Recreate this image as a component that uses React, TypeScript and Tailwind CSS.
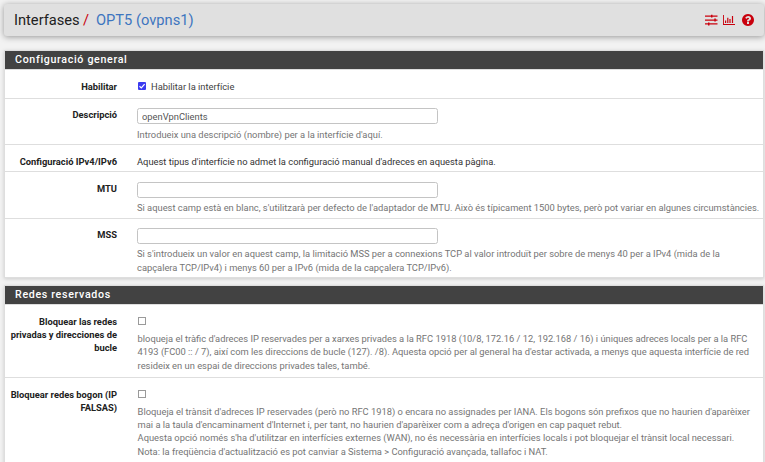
import type { ReactNode } from "react";

function Header() {
  return (
    <header className="mr-px ml-1 flex h-8 items-center justify-between rounded-[3px] bg-[#e0e0e0] pr-[10px] pl-[10px] shadow-[0_1px_6px_rgba(0,0,0,0.38)]">
      <h1 className="flex text-[14.67px] leading-8 whitespace-pre text-[#212121]">
        <span className="w-[66px]">Interfases</span>
        <span className="w-4 pl-[3px] text-[#c9000d]">/</span>
        <span className="text-[#3d75bf]">OPT5 (ovpns1)</span>
      </h1>
      <div className="flex items-center text-[#c9000d]">
        <svg className="mr-[5px]" width="13" height="12" viewBox="0 0 13 12" fill="currentColor">
          <path d="M0 1.500h12.500v1.300H0zM0 5.400h12.500v1.300H0zM0 9.300h12.500v1.300H0z" />
          <path d="M6 .7h1.500v2.900H6zM9.300 4.600h1.500v2.900H9.300zM3 8.500h1.500v2.900H3z" />
        </svg>
        <svg className="mr-[7px]" width="12" height="12" viewBox="0 0 12 12" fill="currentColor">
          <path d="M0 1h.9v9.100H12v.9H0zM2 6.500h1.200V9H2zM4.200 3.800h1.200V9H4.200zM6.400 5h1.200v4H6.400zM8.900 2h1.200v7H8.900z" />
        </svg>
        <svg width="12" height="12" viewBox="0 0 1536 1536" fill="currentColor">
          <path d="M896 1248v-192q0-14-9-23t-23-9H672q-14 0-23 9t-9 23v192q0 14 9 23t23 9h192q14 0 23-9t9-23zm256-672q0-88-55.500-163T958 297t-170-41q-243 0-371 213-15 24 8 42l132 100q7 6 19 6 16 0 25-12 53-68 86-92 34-24 86-24 48 0 85.500 26t37.500 59q0 38-20 61t-68 45q-63 28-115.500 86.500T640 892v36q0 14 9 23t23 9h192q14 0 23-9t9-23q0-19 21.500-49.500T972 829q32-18 49-28.500t46-35 44.500-48 28-60.500 12.500-81zm384 192q0 209-103 385.500T1153.500 1433 768 1536t-385.500-103T103 1153.500 0 768t103-385.500T382.500 103 768 0t385.500 103T1433 382.500 1536 768z" />
        </svg>
      </div>
    </header>
  );
}

function Panel({ title, className, children }: { title: string; className: string; children: ReactNode }) {
  return (
    <section className={`mr-px ml-1 border border-[#dedede] bg-white shadow-[0_1px_4px_rgba(0,0,0,0.16)] ${className}`}>
      <h2 className="h-[18px] bg-[#424242] pl-[10px] text-[10.67px] leading-[17px] font-medium tracking-[0.67px] text-white">
        {title}
      </h2>
      {children}
    </section>
  );
}

function Row({ label, className, children }: { label: ReactNode; className: string; children: ReactNode }) {
  return (
    <div className={`flex border-t border-[#dedede] ${className}`}>
      <div className="w-28 shrink-0 text-right leading-[13px] font-bold whitespace-nowrap text-[#212121]">{label}</div>
      <div className="ml-5 min-w-0 flex-1">{children}</div>
    </div>
  );
}

function Help({ className = "", lines }: { className?: string; lines: string[] }) {
  return (
    <div className={`leading-[13.34px] whitespace-nowrap text-[#757575] ${className}`}>
      {lines.map((line) => (
        <div key={line}>{line}</div>
      ))}
    </div>
  );
}

function Field({ value = "" }: { value?: string }) {
  return (
    <input
      defaultValue={value}
      className="block h-4 w-[301px] rounded-[2.5px] border border-[#c4c4c4] bg-white px-1 text-[9.34px] text-[#555]"
    />
  );
}

function EmptyCheck() {
  return <input type="checkbox" className="ml-px block size-2 appearance-none border border-[#9a9a9a] bg-white" />;
}

export default function App() {
  return (
    <main className="h-[462px] w-[765px] overflow-hidden bg-[#f2f2f2] pt-1 font-[Roboto,sans-serif] text-[9.34px]">
      <Header />
      <Panel title="Configuració general" className="mt-[14px] h-[228px]">
        <Row label="Habilitar" className="h-[29px] pt-[10px]">
          <label className="flex h-[13px] text-[#424242]">
            <span className="mt-[2px] ml-px flex size-2 items-center justify-center rounded-[1px] bg-[#3b3bf0]">
              <svg width="8" height="8" viewBox="0 0 8 8" fill="none" stroke="white" strokeWidth="1.2">
                <path d="M1.5 4.200 3.300 5.900 6.600 2.200" />
              </svg>
            </span>
            <span className="ml-[5px] leading-[13px]">Habilitar la interfície</span>
          </label>
        </Row>
        <Row label="Descripció" className="h-[46px] pt-[9px]">
          <Field value="openVpnClients" />
          <Help className="mt-[4px]" lines={["Introdueix una descripció (nombre) per a la interfície d'aquí."]} />
        </Row>
        <Row label="Configuració IPv4/IPv6" className="h-[27px] pt-[10px]">
          <div className="leading-[13px] text-[#333]">
            Aquest tipus d'interfície no admet la configuració manual d'adreces en aquesta pàgina.
          </div>
        </Row>
        <Row label="MTU" className="h-[47px] pt-[10px]">
          <Field />
          <Help
            className="mt-[3px]"
            lines={["Si aquest camp està en blanc, s'utilitzarà per defecto de l'adaptador de MTU. Això és típicament 1500 bytes, però pot variar en algunes circumstàncies."]}
          />
        </Row>
        <Row label="MSS" className="h-[59px] pt-[9px]">
          <Field />
          <Help
            className="mt-[3.25px]"
            lines={[
              "Si s'introdueix un valor en aquest camp, la limitació MSS per a connexions TCP al valor introduït per sobre de menys 40 per a IPv4 (mida de la",
              "capçalera TCP/IPv4) i menys 60 per a IPv6 (mida de la capçalera TCP/IPv6).",
            ]}
          />
        </Row>
      </Panel>
      <Panel title="Redes reservados" className="mt-[7px] h-[190px]">
        <Row
          label={
            <>
              Bloquear las redes
              <br />
              privadas y direcciones de
              <br />
              bucle
            </>
          }
          className="h-[73px] pt-[10px]"
        >
          <div className="pt-[2px]">
            <EmptyCheck />
          </div>
          <Help
            className="mt-[7px] ml-[0.6px]"
            lines={[
              "bloqueja el tràfic d'adreces IP reservades per a xarxes privades a la RFC 1918 (10/8, 172.16 / 12, 192.168 / 16) i úniques adreces locals per a la RFC",
              "4193 (FC00 :: / 7), així com les direccions de bucle (127). /8). Aquesta opció per al general ha d'estar activada, a menys que aquesta interfície de red",
              "resideix en un espai de direccions privades tales, també.",
            ]}
          />
        </Row>
        <Row
          label={
            <>
              Bloquear redes bogon (IP
              <br />
              FALSAS)
            </>
          }
          className="h-[95px] pt-[10px]"
        >
          <div className="pt-[2px]">
            <EmptyCheck />
          </div>
          <Help
            className="mt-[6.75px] ml-[0.6px]"
            lines={[
              "Bloqueja el trànsit d'adreces IP reservades (però no RFC 1918) o encara no assignades per IANA. Els bogons són prefixos que no haurien d'aparèixer",
              "mai a la taula d'encaminament d'Internet i, per tant, no haurien d'aparèixer com a adreça d'origen en cap paquet rebut.",
              "Aquesta opció només s'ha d'utilitzar en interfícies externes (WAN), no és necessària en interfícies locals i pot bloquejar el trànsit local necessari.",
              "Nota: la freqüència d'actualització es pot canviar a Sistema > Configuració avançada, tallafoc i NAT.",
            ]}
          />
        </Row>
      </Panel>
    </main>
  );
}
